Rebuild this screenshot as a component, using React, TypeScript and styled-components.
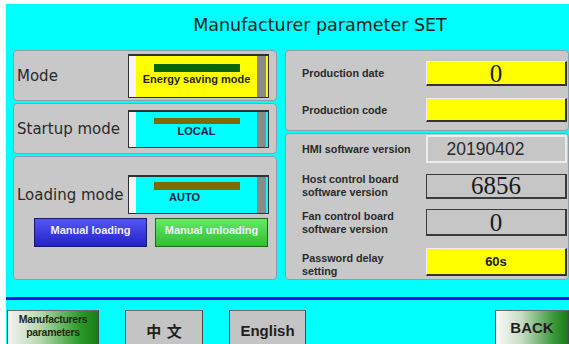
import styled, { createGlobalStyle } from "styled-components";

const GlobalStyle = createGlobalStyle`
  html, body {
    margin: 0;
    padding: 0;
    background: #ffffff;
  }
  body {
    font-family: "Liberation Sans", Arial, sans-serif;
    padding: 4px 0 0 6px;
  }
`;

const Screen = styled.div`
  width: 563px;
  height: 340px;
  background: #00ffff;
  overflow: hidden;
  display: flex;
  flex-direction: column;

  & > * {
    flex-shrink: 0;
  }
`;

const Title = styled.div`
  height: 46px;
  display: flex;
  align-items: center;
  justify-content: center;
  padding: 0 0 4px 65px;
  box-sizing: border-box;
  font-family: "DejaVu Sans", sans-serif;
  font-size: 17.5px;
  color: #1c1c1c;
`;

const Content = styled.div`
  display: flex;
  gap: 8px;
  padding-left: 7px;
  height: 230px;
`;

const Column = styled.div<{ $w: number }>`
  width: ${(p) => p.$w}px;
  display: flex;
  flex-direction: column;
  gap: 2px;
`;

const Panel = styled.div<{ $h: number }>`
  height: ${(p) => p.$h}px;
  flex-shrink: 0;
  box-sizing: border-box;
  background: #c8c8c8;
  border: 1px solid #8f9ea6;
  border-radius: 4px;
`;

const ModePanel = styled(Panel)`
  display: flex;
  align-items: center;
  justify-content: space-between;
  padding: 0 7px 0 3px;
`;

const LoadingPanel = styled(Panel)`
  display: flex;
  flex-direction: column;
  padding: 18px 7px 0 3px;
`;

const ModeRow = styled.div`
  display: flex;
  align-items: center;
  justify-content: space-between;
`;

const ModeLabel = styled.span`
  font-family: "DejaVu Sans", sans-serif;
  font-size: 15px;
  color: #2a2a2a;
`;

const SelectorBox = styled.div<{ $h: number }>`
  width: 141px;
  height: ${(p) => p.$h}px;
  box-sizing: border-box;
  display: flex;
  border: 1px solid #303030;
  border-top-width: 2px;
  background: #303030;
`;

const Bevel = styled.div`
  width: 7px;
  background: #f4f4f4;
`;

const Face = styled.div<{ $bg: string; $pt: number }>`
  flex: 1;
  background: ${(p) => p.$bg};
  display: flex;
  flex-direction: column;
  align-items: center;
  padding-top: ${(p) => p.$pt}px;
`;

const Bar = styled.div<{ $color: string; $h: number }>`
  width: 86px;
  height: ${(p) => p.$h}px;
  background: ${(p) => p.$color};
`;

const FaceText = styled.div<{ $color: string; $shift: number }>`
  font-weight: bold;
  font-size: 11px;
  line-height: 14px;
  color: ${(p) => p.$color};
  margin-right: ${(p) => p.$shift}px;
  white-space: nowrap;
`;

const ScrollStrip = styled.div`
  width: 9px;
  background: #8a8a8a;
`;

const Sliver = styled.div<{ $bg: string }>`
  width: 2px;
  background: ${(p) => p.$bg};
`;

const ManualRow = styled.div`
  display: flex;
  gap: 8px;
  margin-top: 4px;
  padding-left: 17px;
`;

const ManualButton = styled.div<{ $top: string; $bottom: string; $edge: string }>`
  width: 113px;
  height: 29px;
  box-sizing: border-box;
  border: 1px solid ${(p) => p.$edge};
  background: linear-gradient(${(p) => p.$top}, ${(p) => p.$bottom});
  color: #eef0ff;
  font-weight: bold;
  font-size: 11px;
  text-align: center;
  padding-top: 5px;
  white-space: nowrap;
`;

const InfoPanel = styled(Panel)<{ $pt: number; $gap: number }>`
  display: flex;
  flex-direction: column;
  padding-top: ${(p) => p.$pt}px;
  gap: ${(p) => p.$gap}px;
`;

const InfoRow = styled.div`
  display: flex;
  align-items: center;
`;

const InfoLabel = styled.div<{ $drop: number }>`
  width: 140px;
  box-sizing: border-box;
  padding: ${(p) => p.$drop}px 0 0 16px;
  font-weight: bold;
  font-size: 10.8px;
  line-height: 13px;
  color: #2a2a2a;
  white-space: nowrap;
`;

type BoxKind = "yellow" | "dark" | "plain";

const ValueBox = styled.div<{ $kind: BoxKind; $h: number }>`
  width: 141px;
  height: ${(p) => p.$h}px;
  box-sizing: border-box;
  display: flex;
  align-items: center;
  justify-content: center;
  color: #1a1a1a;
  background: ${(p) => (p.$kind === "yellow" ? "#ffff00" : "#c6c6c6")};
  border-style: solid;
  border-width: ${(p) => (p.$kind === "plain" ? "2px" : "1px 2px 2px 1px")};
  border-color: ${(p) =>
    p.$kind === "plain"
      ? "#ececec"
      : p.$kind === "yellow"
      ? "#eeeeee #333333 #333333 #eeeeee"
      : "#3a3a3a #3a3a3a #3a3a3a #3a3a3a"};
`;

const SerifValue = styled.span`
  font-family: "Liberation Serif", "Times New Roman", serif;
  font-size: 25px;
  line-height: 1;
`;

const SansValue = styled.span`
  font-size: 17.5px;
  color: #2a2a2a;
  margin-right: 22px;
`;

const BoldValue = styled.span`
  font-weight: bold;
  font-size: 13px;
`;

const Spacer = styled.div`
  height: 17px;
`;

const BlueLine = styled.div`
  height: 3px;
  background: #1414f0;
`;

const BottomBar = styled.div`
  display: flex;
  align-items: flex-start;
  gap: 26px;
  padding: 10px 0 0 1px;
`;

const BottomButton = styled.div<{ $w: number; $bg: string; $pb: number }>`
  width: ${(p) => p.$w}px;
  height: 40px;
  box-sizing: border-box;
  display: flex;
  align-items: center;
  justify-content: center;
  padding-bottom: ${(p) => p.$pb}px;
  background: ${(p) => p.$bg};
  border: 1px solid #4a4a4a;
  border-top-color: #6a6a6a;
  font-weight: bold;
  font-size: 15px;
  color: #1e1e1e;
  text-align: center;
  white-space: nowrap;
`;

const SmallCaption = styled.span`
  font-size: 10.5px;
  line-height: 13px;
  letter-spacing: -0.3px;
  color: #1e2a10;
`;

const CjkCaption = styled.span`
  font-family: "Noto Sans CJK SC", sans-serif;
  font-size: 15px;
  word-spacing: 2px;
`;

const Push = styled.div`
  flex: 1;
`;

type SelectorProps = {
  color: string;
  bar: string;
  barH: number;
  top: number;
  h: number;
  text: string;
  ink: string;
  shift?: number;
};

const Selector = ({ color, bar, barH, top, h, text, ink, shift = 0 }: SelectorProps) => (
  <SelectorBox $h={h}>
    <Bevel />
    <Face $bg={color} $pt={top}>
      <Bar $color={bar} $h={barH} />
      <FaceText $color={ink} $shift={shift}>
        {text}
      </FaceText>
    </Face>
    <ScrollStrip />
    <Sliver $bg={color} />
  </SelectorBox>
);

const App = () => {
  return (
    <>
      <GlobalStyle />
      <Screen>
        <Title>Manufacturer parameter SET</Title>
        <Content>
          <Column $w={264}>
            <ModePanel $h={51}>
              <ModeLabel>Mode</ModeLabel>
              <Selector
                color="#ffff00"
                bar="#0a640a"
                barH={8}
                top={8}
                h={44}
                text="Energy saving mode"
                ink="#262600"
              />
            </ModePanel>
            <ModePanel $h={51}>
              <ModeLabel>Startup mode</ModeLabel>
              <Selector
                color="#00ffff"
                bar="#7d6a00"
                barH={6}
                top={6}
                h={38}
                text="LOCAL"
                ink="#0c1c44"
              />
            </ModePanel>
            <LoadingPanel $h={124}>
              <ModeRow>
                <ModeLabel>Loading mode</ModeLabel>
                <Selector
                  color="#00ffff"
                  bar="#7d6a00"
                  barH={8}
                  top={5}
                  h={39}
                  text="AUTO"
                  ink="#0c1c44"
                  shift={24}
                />
              </ModeRow>
              <ManualRow>
                <ManualButton $top="#5656f4" $bottom="#2222c8" $edge="#1a1a6a">
                  Manual loading
                </ManualButton>
                <ManualButton $top="#66e866" $bottom="#2fc02f" $edge="#1e6a1e">
                  Manual unloading
                </ManualButton>
              </ManualRow>
            </LoadingPanel>
          </Column>
          <Column $w={284}>
            <InfoPanel $h={81} $pt={10} $gap={12}>
              <InfoRow>
                <InfoLabel $drop={0}>Production date</InfoLabel>
                <ValueBox $kind="yellow" $h={25}>
                  <SerifValue>0</SerifValue>
                </ValueBox>
              </InfoRow>
              <InfoRow>
                <InfoLabel $drop={0}>Production code</InfoLabel>
                <ValueBox $kind="yellow" $h={24} />
              </InfoRow>
            </InfoPanel>
            <InfoPanel $h={147} $pt={1} $gap={10}>
              <InfoRow>
                <InfoLabel $drop={0}>HMI software version</InfoLabel>
                <ValueBox $kind="plain" $h={28}>
                  <SansValue>20190402</SansValue>
                </ValueBox>
              </InfoRow>
              <InfoRow>
                <InfoLabel $drop={0}>
                  Host control board
                  <br />
                  software version
                </InfoLabel>
                <ValueBox $kind="dark" $h={25}>
                  <SerifValue>6856</SerifValue>
                </ValueBox>
              </InfoRow>
              <InfoRow>
                <InfoLabel $drop={0}>
                  Fan control board
                  <br />
                  software version
                </InfoLabel>
                <ValueBox $kind="dark" $h={27}>
                  <SerifValue>0</SerifValue>
                </ValueBox>
              </InfoRow>
              <InfoRow>
                <InfoLabel $drop={6}>
                  Password delay
                  <br />
                  setting
                </InfoLabel>
                <ValueBox $kind="yellow" $h={28}>
                  <BoldValue>60s</BoldValue>
                </ValueBox>
              </InfoRow>
            </InfoPanel>
          </Column>
        </Content>
        <Spacer />
        <BlueLine />
        <BottomBar>
          <BottomButton
            $w={92}
            $bg="linear-gradient(to right, #f4f4f4, #b8d8b0 35%, #2a9a2a 80%, #1a7c1a)"
            $pb={8}
          >
            <SmallCaption>
              Manufacturers
              <br />
              parameters
            </SmallCaption>
          </BottomButton>
          <BottomButton $w={78} $bg="#c4c4c4" $pb={0}>
            <CjkCaption>中 文</CjkCaption>
          </BottomButton>
          <BottomButton $w={77} $bg="#c4c4c4" $pb={0}>
            English
          </BottomButton>
          <Push />
          <BottomButton
            $w={74}
            $bg="linear-gradient(to right, #fafafa, #c8dcc4 35%, #3a9a3a 80%, #1a7a1a)"
            $pb={6}
          >
            BACK
          </BottomButton>
        </BottomBar>
      </Screen>
    </>
  );
};

export default App;
